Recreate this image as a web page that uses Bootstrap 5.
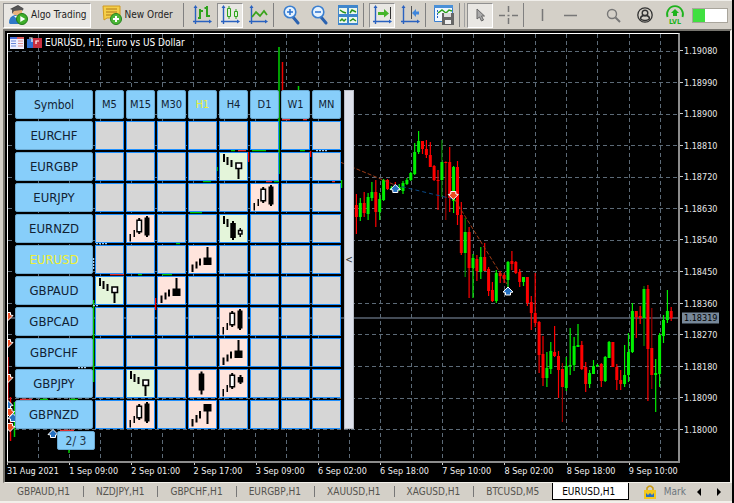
<!DOCTYPE html>
<html lang="en">
<head>
<meta charset="utf-8">
<meta name="viewport" content="width=device-width, initial-scale=1">
<title>EURUSD, H1</title>
<link href="https://cdn.jsdelivr.net/npm/bootstrap@5.3.0/dist/css/bootstrap.min.css" rel="stylesheet">
<style>
:root{--face:#d4d0c8;--slate:#778899;--sky:#87cefa;--blue:#1e90ff}
body{font-family:"DejaVu Sans Condensed","DejaVu Sans",sans-serif;font-size:10px;line-height:12px;color:#222;background:#000;padding-right:2px;overflow:hidden}
.shell{background:var(--face)}
.toolbar{height:29px;padding:0 4px 0 3px;gap:2px;border-top:1px solid #f0eeea}
.tool{flex:none;width:26px;height:25px;padding:0;border:1px solid transparent;background:none;display:flex;align-items:center;justify-content:center;color:#222}
.tool.wide{width:auto;padding:0 3px 0 4px;gap:3px}
.tool.pressed{border-color:#909090 #fff #fff #909090;background:#e9e7e3}
.rule{flex:none;width:4px;height:24px;border-left:1px solid #808080}
.rule.twin{width:6px;border-right:1px solid #a0a0a0}
.battery{width:36px;height:15px;border:1px solid #a9a59c;border-radius:0;background:#fff}
.battery .progress-bar{background:#40e040}
.terminal{margin-left:3px;background:#000;border:solid;border-width:2px 2px 1px 2px;border-color:#77756f #f2f0ea #f2f0ea #77756f;display:grid;grid-template:minmax(0,1fr) 19px / minmax(0,1fr) 50px;padding:2px 0 0 2px}
.plot{border:solid;border-width:1px 2px 2px 1px;border-color:#fff #8c8c8c #8c8c8c #fff}
.plot>svg{width:100%;height:100%;display:block}
.caption{position:absolute;left:2px;top:3px;color:#fff;gap:3px}
.prices{color:#e8e8e8;font-size:9px;line-height:12px;padding:12px 0 27px}
.prices span::before{content:"";display:inline-block;width:3px;height:1px;background:#ccc;vertical-align:3px;margin-right:1px}
.last-price{position:absolute;left:2px;top:66.3%;transform:translateY(-50%);background:var(--slate);color:#000;font-size:9px;line-height:11px;padding:0 2px}
.times{grid-column:1/-1;display:grid;grid-template-columns:repeat(11,minmax(0,1fr));margin-right:39px;color:#f0f0f0;font-size:9px;line-height:12px;white-space:nowrap}
.times span::before{content:"";display:block;width:1px;height:2px;background:#ccc}
.scanner{position:absolute;left:5px;top:54px;gap:0}
.signals{border-collapse:separate;border-spacing:2px;table-layout:fixed;width:330px}
.signals th,.signals td{height:29px;padding:0;text-align:center}
.signals td{border:1px solid var(--blue);background:#d6d6d6}
.signals td.bull{background:#e4f5da}
.signals td.bear{background:#ffe4dc}
.signals td svg{display:block;width:27px;height:27px}
.signals .sym{width:78px}
.key{display:block;width:100%;height:29px;border:1px solid #6aa8d0;border-radius:2px;background:var(--sky);color:#123;padding:0;font-size:13px;line-height:16px}
.key.tf{font-size:11px}
.sym .key{font-size:12px}
.key.on{color:#f0f032}
.grip{width:10px;margin:2px 0 2px 1px;padding:0;border:1px solid #b8bcc6;background:#dde1ea;color:#333;font-size:10px}
.pager{display:block;margin-left:44px;width:38px;height:19px;border:1px solid #6aa8d0;border-radius:2px;background:var(--sky);color:#234;font-size:12px;line-height:16px;text-align:center}
.tabs{height:20px;padding:1px 4px 2px 4px;border-bottom:2px solid #f2f0ea}
.tabs .nav-link{padding:2px 13px 0;line-height:13px;color:#55534e;border-radius:0}
.tabs .nav-item+.nav-item:not(.current){background:linear-gradient(#777,#777) 0 3px/1px 11px no-repeat}
.tabs .current .nav-link{background:#fff;color:#000;border:solid #000;border-width:0 1px 1px;padding:2px 13px 0 9px;height:17px}
.tabs .arrow{border:0;background:none;padding:0;width:19px;font-size:10px;line-height:12px;color:#000}
</style>
</head>
<body>
<div class="shell vh-100 d-flex flex-column">

<header class="toolbar d-flex align-items-center">
  <button class="tool wide pressed" type="button"><svg width="20" height="20" viewBox="0 0 20 20"><path d="M2 4l8-4 6 4-6 3z" fill="#444"/><path d="M5 5h9v4q-4 4-9 0z" fill="#e8b27c"/><path d="M4 4v5l2-3 8-1 1 1V3l-5-2z" fill="#555"/><path d="M1 18q0-7 6-8l6 2v7H2z" fill="#2f78c8"/><path d="M6 11l3 3 2-3" fill="#fff"/><circle cx="14" cy="14" r="5.5" fill="#3fae2a" stroke="#1f7a1a"/><path d="M12.300 11l5 3-5 3z" fill="#fff"/></svg>Algo Trading</button>
  <button class="tool wide ms-1 me-1" type="button"><svg width="20" height="20" viewBox="0 0 20 20"><path d="M1 1h17v12H5l-3 2z" fill="#f5cf4a" stroke="#d09a20"/><path d="M4 4h11M4 7h11M4 10h8" stroke="#b07818"/><circle cx="14" cy="14" r="5.500" fill="#4cb637" stroke="#23831d"/><path d="M14 11v6M11 14h6" stroke="#fff" stroke-width="2"/></svg>New Order</button>
  <i class="rule"></i>
  <button class="tool" type="button" aria-label="Bar chart"><svg width="20" height="20" viewBox="0 0 20 20"><path d="M3.500 19V2M1 16.500h17" stroke="#2a62c0" stroke-width="1.400"/><path d="M3.500 0l2 3h-4zM20 16.500l-3-2v4z" fill="#2a62c0"/><path d="M8 4v10M6 13h2M8 6h3M15 1v11M12.500 3H15M15 11h3" stroke="#2ea31c" stroke-width="2"/></svg></button>
  <button class="tool pressed" type="button" aria-label="Candlesticks"><svg width="20" height="20" viewBox="0 0 20 20"><path d="M3.500 19V2M1 16.500h17" stroke="#2a62c0" stroke-width="1.400"/><path d="M3.500 0l2 3h-4zM20 16.500l-3-2v4z" fill="#2a62c0"/><path d="M9 1v13M16 4v10" stroke="#2ea31c"/><path d="M7.500 3.500h3v8h-3zM14.500 6.500h3v5h-3z" fill="#dff2d8" stroke="#2ea31c"/></svg></button>
  <button class="tool" type="button" aria-label="Line chart"><svg width="20" height="20" viewBox="0 0 20 20"><path d="M3.500 19V2M1 16.500h17" stroke="#2a62c0" stroke-width="1.400"/><path d="M3.500 0l2 3h-4zM20 16.500l-3-2v4z" fill="#2a62c0"/><path d="M4 12l4-5 4 4 4-5 3 4" fill="none" stroke="#3aa31c" stroke-width="1.800"/></svg></button>
  <i class="rule"></i>
  <button class="tool" type="button" aria-label="Zoom in"><svg width="20" height="20" viewBox="0 0 20 20"><path d="M11 12l5 6" stroke="#2a62b0" stroke-width="3" stroke-linecap="round"/><circle cx="8" cy="7" r="5.800" fill="#e6f3ff" stroke="#3a7fd0" stroke-width="1.600"/><path d="M8 4v6M5 7h6" stroke="#2a72d0" stroke-width="1.500"/></svg></button>
  <button class="tool" type="button" aria-label="Zoom out"><svg width="20" height="20" viewBox="0 0 20 20"><path d="M11 12l5 6" stroke="#2a62b0" stroke-width="3" stroke-linecap="round"/><circle cx="8" cy="7" r="5.800" fill="#e6f3ff" stroke="#3a7fd0" stroke-width="1.600"/><path d="M5 7h6" stroke="#2a72d0" stroke-width="1.500"/></svg></button>
  <button class="tool" type="button" aria-label="Tile windows"><svg width="20" height="20" viewBox="0 0 20 20"><path d="M0 0h20v20H0z" fill="#3f86cc"/><path d="M1 3h8v6H1zM11 3h8v6h-8zM1 12h8v6H1zM11 12h8v6h-8z" fill="#eef8ee"/><path d="M2 5l3 2 3 1M12 8l2-3 4 2M2 16l2-2 2 2 2-2M12 16l3-2 3 2" fill="none" stroke="#2a941c" stroke-width="1.500"/></svg></button>
  <i class="rule"></i>
  <button class="tool pressed" type="button" aria-label="Auto scroll"><svg width="20" height="20" viewBox="0 0 20 20"><path d="M3.500 19V2M1 16.500h17" stroke="#2a62c0" stroke-width="1.400"/><path d="M3.500 0l2 3h-4zM20 16.500l-3-2v4z" fill="#2a62c0"/><path d="M18.500 2v12" stroke="#333"/><path d="M6 7h6V4l5 4.500-5 4V10H6z" fill="#45b52a"/></svg></button>
  <button class="tool" type="button" aria-label="Chart shift"><svg width="20" height="20" viewBox="0 0 20 20"><path d="M3.500 19V2M1 16.500h17" stroke="#2a62c0" stroke-width="1.400"/><path d="M3.500 0l2 3h-4zM20 16.500l-3-2v4z" fill="#2a62c0"/><path d="M11.500 1v13" stroke="#555"/><path d="M19 6.500h-3V4l-4 4 4 4V9.500h3z" fill="#3f86dc"/></svg></button>
  <i class="rule"></i>
  <button class="tool" type="button" aria-label="Templates"><svg width="20" height="20" viewBox="0 0 20 20"><path d="M.5.5h18v16H.5z" fill="#f2f8ff" stroke="#3a7fd0"/><path d="M0 0h19v3H0z" fill="#4a90d8"/><path d="M3.500 5v9" stroke="#2a62c0" stroke-dasharray="2 1"/><path d="M4 8l4-3 4 3 3-3 3 1" fill="none" stroke="#2ea31c" stroke-width="1.500"/><path d="M8 8h12v12H8z" fill="#666"/><path d="M10 8h7v4h-7z" fill="#ddd"/><path d="M11 15h6v4h-6z" fill="#eee"/></svg></button>
  <i class="rule twin"></i>
  <button class="tool pressed" type="button" aria-label="Cursor"><svg width="20" height="20" viewBox="0 0 20 20"><path d="M7 4v10l2.500-2 2 4 2-1-2-4h3z" fill="#aaa" stroke="#666"/></svg></button>
  <button class="tool" type="button" aria-label="Crosshair"><svg width="20" height="20" viewBox="0 0 20 20"><path d="M10.500 1v6M10.500 13v6M1 10.500h6M14 10.500h6M9.500 10.500h2" stroke="#777" stroke-width="1.500"/></svg></button>
  <i class="rule"></i>
  <button class="tool" type="button" aria-label="Vertical line"><svg width="20" height="20" viewBox="0 0 20 20"><path d="M10.500 4v12" stroke="#777" stroke-width="1.500"/></svg></button>
  <button class="tool" type="button" aria-label="Horizontal line"><svg width="20" height="20" viewBox="0 0 20 20"><path d="M4 10.500h13" stroke="#777" stroke-width="1.500"/></svg></button>
  <div class="d-flex align-items-center gap-1 ms-auto">
    <button class="tool" type="button" aria-label="Search"><svg width="20" height="20" viewBox="0 0 20 20"><circle cx="7" cy="9" r="4.500" fill="none" stroke="#777" stroke-width="1.400"/><path d="M10.500 12.500l4.500 4.500" stroke="#777" stroke-width="2"/></svg></button>
    <button class="tool" type="button" aria-label="Account"><svg width="18" height="18" viewBox="0 0 18 18"><circle cx="9" cy="9" r="7.200" fill="none" stroke="#333" stroke-width="1.300"/><circle cx="9" cy="7" r="2.800" fill="none" stroke="#333" stroke-width="1.400"/><path d="M4.500 13q0-3 3-3.500h3q3 .5 3 3.500-4.500 3-9 0z" fill="none" stroke="#333" stroke-width="1.400"/></svg></button>
    <button class="tool" type="button" aria-label="Level"><svg width="20" height="20" viewBox="0 0 20 20"><path d="M2.500 12a8 8 0 1 1 15 0" fill="none" stroke="#1db31d" stroke-width="1.800"/><path d="M10 4l4 4-2 0v3H8V8H6z" fill="#1db31d"/><text x="10" y="19" text-anchor="middle" font-size="7" font-weight="bold" fill="#1db31d">LVL</text></svg></button>
    <div class="progress battery" role="progressbar" aria-label="Connection" aria-valuenow="34" aria-valuemin="0" aria-valuemax="100"><div class="progress-bar" style="width:34%"></div></div>
  </div>
</header>

<main class="terminal flex-grow-1 overflow-hidden">
  <section class="plot position-relative">
    <svg id="chart" viewBox="8 34 670 427" preserveAspectRatio="none" aria-label="EURUSD hourly candles"></svg>
    <div class="caption d-flex align-items-center">
      <svg width="14" height="12" viewBox="0 0 14 12"><path d="M0 0h14v12H0z" fill="#eef"/><path d="M0 0h7v2H0z" fill="#4a70d8"/><path d="M7 0h7v2H7z" fill="#e06060"/><path d="M1 4h5M1 6.500h5M1 9h5" stroke="#6a86d8"/><path d="M8 4h5M8 6.500h5M8 9h5" stroke="#e09090"/></svg>
      <svg width="15" height="12" viewBox="0 0 15 12"><path d="M0 2h7v9H0z" fill="#2f6fd0"/><path d="M6 1h9v10H6z" fill="#c83040"/><path d="M2 1h3v4M12 4H9v3" fill="none" stroke="#fff" stroke-width="1.200"/></svg>
      <span>EURUSD, H1: Euro vs US Dollar</span>
    </div>
    <div class="scanner">
      <div class="d-flex">
        <table class="signals">
          <thead><tr id="timeframes"></tr></thead>
          <tbody id="pairs"></tbody>
        </table>
        <button class="grip" type="button" aria-label="Collapse panel">&lt;</button>
      </div>
      <button class="pager p-0" type="button">2/ 3</button>
    </div>
  </section>
  <aside class="prices position-relative d-flex flex-column justify-content-between">
    <span>1.19080</span><span>1.18990</span><span>1.18900</span><span>1.18810</span><span>1.18720</span><span>1.18630</span><span>1.18540</span><span>1.18450</span><span>1.18360</span><span>1.18270</span><span>1.18180</span><span>1.18090</span><span>1.18000</span>
    <b class="last-price fw-normal">1.18319</b>
  </aside>
  <div class="times">
    <span>31 Aug 2021</span><span>1 Sep 09:00</span><span>2 Sep 01:00</span><span>2 Sep 17:00</span><span>3 Sep 09:00</span><span>6 Sep 02:00</span><span>6 Sep 18:00</span><span>7 Sep 10:00</span><span>8 Sep 02:00</span><span>8 Sep 18:00</span><span>9 Sep 10:00</span>
  </div>
</main>

<nav class="tabs d-flex align-items-center">
  <ul class="nav flex-nowrap">
    <li class="nav-item"><a class="nav-link" href="#">GBPAUD,H1</a></li>
    <li class="nav-item"><a class="nav-link" href="#">NZDJPY,H1</a></li>
    <li class="nav-item"><a class="nav-link" href="#">GBPCHF,H1</a></li>
    <li class="nav-item"><a class="nav-link" href="#">EURGBP,H1</a></li>
    <li class="nav-item"><a class="nav-link" href="#">XAUUSD,H1</a></li>
    <li class="nav-item"><a class="nav-link" href="#">XAGUSD,H1</a></li>
    <li class="nav-item"><a class="nav-link" href="#">BTCUSD,M5</a></li>
    <li class="nav-item current"><a class="nav-link" href="#" aria-current="page">EURUSD,H1</a></li>
  </ul>
  <a href="#" class="d-flex align-items-center gap-2 ms-auto me-1 text-decoration-none text-secondary"><svg width="12" height="14" viewBox="0 0 12 14"><path d="M3 6V3q3-4 6 0v3" fill="none" stroke="#c89a10" stroke-width="1.500"/><path d="M0 5h12v9H0z" fill="#f2c81e"/><path d="M2 12V8l2 2 2-2 2 2 2-2v4z" fill="#2a70c0"/></svg>Mark</a>
  <button class="arrow" type="button" aria-label="Scroll left"><svg width="5" height="8" viewBox="0 0 5 8"><path d="M4 0v8L0 4z"/></svg></button>
  <button class="arrow" type="button" aria-label="Scroll right"><svg width="5" height="8" viewBox="0 0 5 8"><path d="M1 0v8l4-4z"/></svg></button>
</nav>
</div>

<script src="https://cdn.jsdelivr.net/npm/bootstrap@5.3.0/dist/js/bootstrap.bundle.min.js"></script>
<script>
// Candles: direction, high, body top, body bottom, low
const candles = `r 194 205 217 234|g 198 203 217 221|r 192 203 213 217|g 193 197 214 220|g 182 192 198 201|r 180 192 212 227|g 193 199 212 220|g 179 180 200 201|r 179 180 189 190|g 186 188 190 190|r 182 187 190 192|g 184 187 190 191|g 181 183 191 194|g 178 180 184 185|g 172 173 180 181|g 143 152 174 175|g 131 141 152 154|r 141 141 149 154|r 140 149 155 158|r 142 155 167 167|r 165 166 180 181|r 170 180 181 210|g 140 162 180 197|r 161 162 163 220|r 147 162 198 212|g 166 167 201 213|r 161 167 215 225|r 202 215 253 255|g 218 232 253 277|r 227 232 268 298|g 254 258 268 298|r 255 259 271 281|g 247 257 272 279|r 243 257 271 271|r 267 269 291 296|r 282 290 301 302|g 270 273 301 303|r 271 273 276 283|r 273 275 279 283|g 261 262 280 288|r 251 261 264 270|r 261 262 273 274|r 269 272 282 287|g 277 277 282 286|r 277 277 303 306|r 296 302 313 330|r 273 313 323 327|r 321 322 355 373|r 336 354 378 386|g 352 368 378 387|g 342 351 369 374|r 326 352 356 357|r 351 356 370 398|r 363 369 387 422|g 357 366 388 391|g 328 365 366 375|g 337 346 365 371|g 324 345 347 347|r 341 345 369 370|r 362 367 384 392|g 370 373 384 388|g 360 366 374 374|g 364 365 366 367|r 363 364 381 387|g 356 357 381 382|g 341 342 358 358|r 342 342 367 367|r 364 367 380 390|r 370 380 384 390|g 345 375 384 387|g 333 352 375 382|g 303 311 352 353|r 311 311 317 338|r 306 316 318 324|g 286 289 318 346|r 285 289 349 401|r 308 348 375 389|g 359 373 375 412|g 333 335 374 387|g 315 320 336 343|g 290 311 320 323|r 307 311 318 321`.split('|');
const col = {g:'#00f000', r:'#ff0000'}, dim = {g:'#008a00', r:'#9a0000'};
let s = '<g stroke="#5c6a77" stroke-dasharray="4 3">';
for (let i = 1; i < 22; i++) { const x = Math.floor(7 + 31.1 * i) + .5; s += `<path d="M${x} 34V461"/>`; }
for (let i = 0; i < 13; i++) { const y = Math.floor(51 + 31.55 * i) + .5; s += `<path d="M8 ${y}H678"/>`; }
s += '</g><path d="M8 318H678" stroke="#5a6573" stroke-width="1.500"/>';
// Older bars, mostly hidden by the scanner panel
s += '<g stroke-width="1.500"><path d="M279 47V174M298.500 86V91M93.500 300V382M341.500 180V188M14.500 402V437M69 449V453M217 167V171" stroke="#00d000"/><path d="M282.500 62V93M7.900 357V400M10.500 397V441M155.500 298V310M248.500 152V162M310.500 151V157" stroke="#f00000"/>';
s += '<path d="M231 150.500h4M252 150.500h14M300 150.500h5M203 181.500h8M190 212.500h12M176 243.500h4M274 181.500h5M138 274.500h4M162 274.500h10M40 399.500h8M70 399.500h8" stroke="#00c000"/><path d="M238 150.500h8M282 119.500h8M303 119.500h4M266 181.500h6M20 399.500h12M110 274.500h14M60 430.500h14M332 181.500h3" stroke="#e03030"/><path d="M96 243.500h12M316 150.500h12M93 305.500h6M78 367.500h8M93.500 258V270" stroke="#a8d0f0" stroke-dasharray="2 1"/></g>';
candles.forEach((row, i) => {
  const [d, h, t, b, l] = row.split(' ').map((v, k) => k ? +v : v), x = 356.4 + 3.887 * i;
  const faint = (l - h) > 55 && (b - t) < 30;
  s += `<path d="M${x.toFixed(1)} ${h}V${l}" stroke="${(faint ? dim : col)[d]}" stroke-width="1.200"/><rect x="${(x - 1.5).toFixed(1)}" y="${t}" width="3" height="${Math.max(1, b - t)}" fill="${col[d]}"/>`;
});
s += '<path d="M340 162L395 185M455 200L507 284" stroke="#a03c18" stroke-dasharray="4 2"/><path d="M395 185L453 199" stroke="#0a4a88" stroke-dasharray="4 3"/>';
const mark = (x, y, up, c) => `<path transform="translate(${x} ${y}) scale(1 ${up ? 1 : -1})" d="M0-4.500L5 .5 2.500 1V3.500H-2.500V1L-5 .5z" fill="${c}" stroke="#fff" stroke-width="1"/>`;
s += mark(395.3, 189, 1, '#2470c0') + mark(508, 291.500, 1, '#2470c0') + mark(453.3, 195, 0, '#e84a20') + mark(53, 434, 1, '#2470c0');
[[8, 316], [8, 343], [8, 378], [9.5, 412], [10, 427]].forEach(p => s += mark(p[0], p[1], 0, '#e84a20'));
s += mark(8, 405, 1, '#2470c0') + mark(13, 418, 1, '#2470c0');
document.getElementById('chart').innerHTML = s;

// Candlestick pattern glyphs, in a 27-unit box
const falling = '<path d="M4 1h2v8H4zM7.500 4h2v8h-2zM11.500 7h2v7h-2z"/>', rising2 = '<path d="M3.500 19h1.500v7.500H3.500zM7.500 15h1.500v7H7.500z"/>';
const hollow = '<path d="M12.200 3h2v16h-2z"/><path d="M11 5.200h4.500v11.600H11z" fill="#fff" stroke="#000" stroke-width="1.500"/>';
const glyph = {
  hammer: falling + '<path d="M18.500 15h2v11h-2z"/><path d="M17 10h5.500v5.500H17z" fill="#fff" stroke="#000" stroke-width="1.600"/>',
  engulf: rising2 + hollow + '<path d="M18.500 2.500h5v18h-5zM20 1h2v21h-2z"/>',
  haramiUp: '<path d="M4 1h2v8H4zM7.500 4h2v8h-2zM11.300 8h5.500v15h-5.500zM13 6h2v19h-2zM20.500 13h1.500v9h-1.500z"/><path d="M19.500 15.500h3.500v3.500h-3.500z" fill="#fff" stroke="#000" stroke-width="1.500"/>',
  shooting: '<path d="M3.500 18.500h2v7.500h-2zM7.500 15.500h2v7h-2zM11 12.500h2v7h-2zM15.500 11.500h8v7.500h-8zM18.500 1h2v12h-2z"/>',
  hanging: '<path d="M3.500 18h2v7.500h-2zM7.500 14h2v7.500h-2zM11 10h2v7.500h-2zM15.500 3h8v7.500h-8zM18.500 9h2v14h-2z"/>',
  solid: '<path d="M10.700 3.500h5.600v17h-5.600zM12.500 1.500h2v23h-2z"/>',
  haramiDown: rising2 + hollow + '<path d="M18.700 7h5.500v5.500h-5.500zM20.500 5h2v9h-2z"/>'
};
const tf = ['M5','M15','M30','H1','H4','D1','W1','MN'];
const found = {
  EURCHF:{}, EURGBP:{H4:'hammer bull'}, EURJPY:{D1:'engulf bear'}, EURNZD:{M15:'engulf bear',H4:'haramiUp bull'},
  EURUSD:{H1:'shooting bear'}, GBPAUD:{M5:'hammer bull',M30:'shooting bear'}, GBPCAD:{H4:'engulf bear'}, GBPCHF:{H4:'shooting bear'},
  GBPJPY:{M15:'hammer bull',H1:'solid bear',H4:'haramiDown bear'}, GBPNZD:{M15:'engulf bear',H1:'hanging bear'}
};
document.getElementById('timeframes').innerHTML = '<th class="sym"><div class="key d-flex align-items-center justify-content-center fw-normal">Symbol</div></th>' +
  tf.map(t => `<th><button type="button" class="key tf${t === 'H1' ? ' on' : ''}">${t}</button></th>`).join('');
document.getElementById('pairs').innerHTML = Object.entries(found).map(([p, f]) =>
  `<tr><th><button type="button" class="key${p === 'EURUSD' ? ' on' : ''}">${p}</button></th>` + tf.map(t => {
    if (!f[t]) return '<td></td>';
    const [g, side] = f[t].split(' ');
    return `<td class="${side}"><svg viewBox="1 0 27 27" aria-label="${g}">${glyph[g]}</svg></td>`;
  }).join('') + '</tr>').join('');
</script>
</body>
</html>
